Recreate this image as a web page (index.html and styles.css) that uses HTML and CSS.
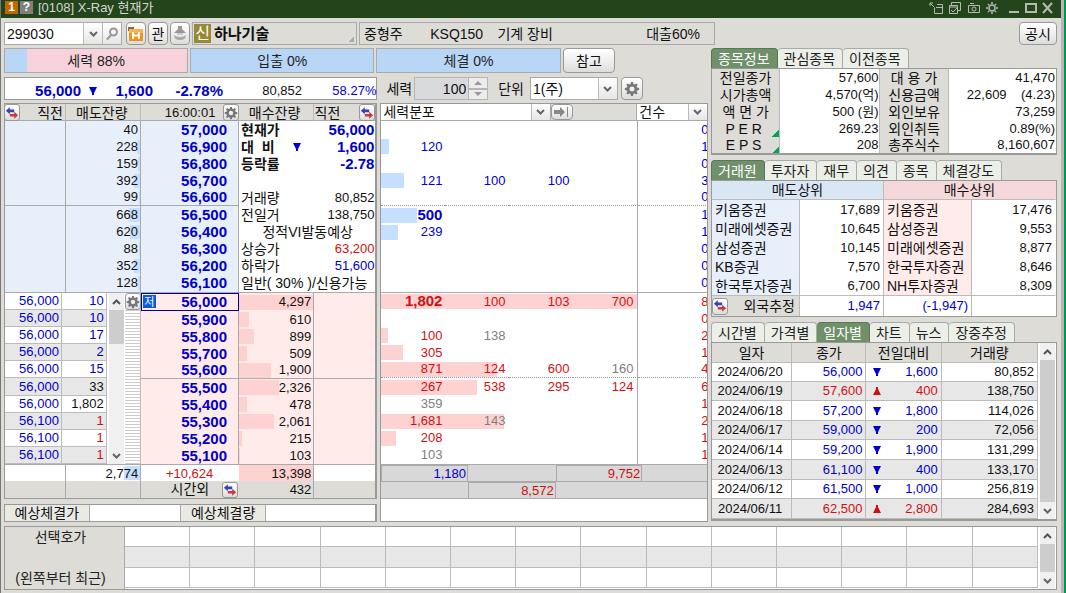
FILE: index.html
```html
<!DOCTYPE html>
<html lang="ko">
<head>
<meta charset="utf-8">
<title>[0108] X-Ray 현재가</title>
<link rel="stylesheet" href="styles.css">
</head>
<body>
<svg class="defs" aria-hidden="true">
  <symbol id="swap" viewBox="0 0 16 16"><path d="M1 5.500l4.500-4v2.500h5v3h-5V9.500z" fill="#3b3fb8"/><path d="M15 10.500l-4.500-4V9h-5v3h5v2.500z" fill="#c93a3a"/></symbol>
  <symbol id="gear" viewBox="0 0 16 16"><path fill="#777" fill-rule="evenodd" d="M7 1h2l.4 2 1.300.500L12.400 2.400l1.300 1.300-1.100 1.600.500 1.300 2 .4v2l-2 .4-.5 1.300 1.100 1.600-1.300 1.300-1.700-1.100-1.300.5L9 15H7l-.4-2-1.300-.5-1.700 1.100-1.300-1.300 1.100-1.600-.5-1.300-2-.4V7l2-.4.500-1.300-1.100-1.600 1.300-1.300 1.700 1.100L6.600 3zM8 5.500a2.500 2.500 0 1 0 0 5a2.500 2.500 0 0 0 0-5z"/></symbol>
  <symbol id="chev-down" viewBox="0 0 9 6"><path d="M1 1l3.500 3.500L8 1" fill="none" stroke="#666" stroke-width="2"/></symbol>
  <symbol id="chev-up" viewBox="0 0 9 6"><path d="M1 5l3.500-3.500L8 5" fill="none" stroke="#555" stroke-width="2"/></symbol>
  <symbol id="down" viewBox="0 0 8 8"><path d="M0 0h8L5 6v2H3V6z" fill="#0000d0"/></symbol>
  <symbol id="up" viewBox="0 0 8 8"><path d="M3 0h2v2l3 6H0l3-6z" fill="#d01010"/></symbol>
</svg>
<div class="window">
  <header class="titlebar">
    <span class="badge badge-num">1</span><span class="badge badge-help">?</span>
    <h1 class="title">[0108] X-Ray 현재가</h1>
    <div class="wintools">
      <button aria-label="분리"><svg width="14" height="12" viewBox="0 0 14 12"><path d="M5.500 5.500v6h8v-9H8M7 5.500h6.500M1 1l4 4M1 4V1h3" /></svg></button>
      <button aria-label="복사"><svg width="14" height="12" viewBox="0 0 14 12"><path d="M3.500 3V.5h9v8H10M1.500 3.500h8v8h-8zM1 5h9M3 8l2 2 4-4"/></svg></button>
      <button aria-label="캡처"><svg width="14" height="12" viewBox="0 0 14 12"><path d="M1.500 3.500h11v7h-11zM3 1.500h4M5 7a2 2 0 1 0 4 0a2 2 0 1 0-4 0"/></svg></button>
      <button aria-label="설정"><svg width="12" height="12" viewBox="0 0 12 12"><path d="M3 6a3 3 0 1 0 6 0a3 3 0 1 0-6 0M6 0v2M6 10v2M0 6h2M10 6h2M2 2l1 1M9 9l1 1M10 2L9 3M3 9l-1 1" stroke-width="1.500"/></svg></button>
      <button class="winbtn" aria-label="최소화"><svg width="12" height="12" viewBox="0 0 12 12"><path d="M1 10h10" stroke-width="2"/></svg></button>
      <button aria-label="최대화"><svg width="12" height="12" viewBox="0 0 12 12"><path d="M1 2h10v8H1z" stroke-width="2"/></svg></button>
      <button aria-label="닫기"><svg width="12" height="12" viewBox="0 0 12 12"><path d="M1 1l9 10M10 1l-9 10" stroke-width="2"/></svg></button>
    </div>
  </header>

  <main class="content">
    <div class="searchbar">
      <div class="codebox">
        <input class="code" type="text" value="299030" aria-label="종목코드">
        <button class="seg" aria-label="목록"><svg width="9" height="6"><use href="#chev-down"/></svg></button>
        <button class="seg" aria-label="검색"><svg width="13" height="14" viewBox="0 0 13 14"><path d="M4 5a3.500 3.500 0 1 0 7 0a3.500 3.500 0 1 0-7 0M5 8l-4 4.500" fill="none" stroke="#999" stroke-width="2"/></svg></button>
      </div>
      <button class="btn tool" aria-label="종목 폴더"><svg width="16" height="15" viewBox="0 0 16 15"><path d="M0 1h6v2h8v2H0z" fill="#8a6a3a"/><path d="M1 3h14v12H1z" fill="#f0921c"/><path d="M1 3h14v4H1z" fill="#f7b34e"/><path d="M5 6v7M11 6v7M5 9.500h6" stroke="#fff" stroke-width="2"/></svg></button>
      <button class="btn tool">관</button>
      <button class="btn tool" aria-label="알림"><svg width="14" height="16" viewBox="0 0 14 16"><path d="M5 0h4v3l4 4H1l4-4z" fill="#999"/><path d="M4 7h6v2H4z" fill="#ccc"/><path d="M1 9q0 5 6 5t6-5q-2 2-6 2T1 9z" fill="#aaa"/></svg></button>
      <div class="namebox"><span class="new">신</span><strong>하나기술</strong></div>
      <div class="infobox"><span>중형주</span><span>KSQ150</span><span>기계 장비</span><span class="loan">대출60%</span></div>
      <button class="btn notice">공시</button>
    </div>

    <div class="body">
      <section class="left">
        <div class="meters">
          <div class="meter meter-split">세력 88%</div>
          <div class="meter">입출 0%</div>
          <div class="meter">체결 0%</div>
          <button class="btn">참고</button>
        </div>
        <div class="quote">
          <b>56,000</b><svg width="8" height="8"><use href="#down"/></svg><b>1,600</b><b>-2.78%</b><span class="vol">80,852</span><span>58.27%</span>
        </div>
        <div class="options">
          <label for="force">세력</label>
          <div class="spin"><input id="force" type="text" value="100" disabled><div class="spinner"><button aria-label="증가"><svg width="8" height="4" viewBox="0 0 8 4"><path d="M0 4l4-4 4 4z" fill="#999"/></svg></button><button aria-label="감소"><svg width="8" height="4" viewBox="0 0 8 4"><path d="M0 0l4 4 4-4z" fill="#999"/></svg></button></div></div>
          <label for="unit">단위</label>
          <div class="combo unit"><select id="unit"><option>1(주)</option></select><span class="arrow"><svg width="9" height="6"><use href="#chev-down"/></svg></span></div>
          <button class="btn gearbtn" aria-label="설정"><svg width="16" height="16"><use href="#gear"/></svg></button>
        </div>

        <div class="bookcol">
          <div class="panel book">
            <div class="bookhead">
              <div class="bh"><button class="btn mini" aria-label="전환"><svg width="14" height="14"><use href="#swap"/></svg></button><span>직전</span></div>
              <div class="bh mid">매도잔량</div>
              <div class="bh"><span class="time">16:00:01</span><button class="btn mini" aria-label="설정"><svg width="14" height="14"><use href="#gear"/></svg></button></div>
              <div class="bh mid">매수잔량</div>
              <div class="bh"><span>직전</span><button class="btn mini" aria-label="전환"><svg width="14" height="14"><use href="#swap"/></svg></button></div>
            </div>
            <div class="asks">
              <table class="asktable">
                <colgroup><col class="c61"><col class="c75"><col class="c98"></colgroup>
                <tr><td></td><td>40</td><td class="px">57,000</td></tr>
                <tr><td></td><td class="rb" style="--w:3px">228</td><td class="px">56,900</td></tr>
                <tr><td></td><td class="rb" style="--w:2px">159</td><td class="px">56,800</td></tr>
                <tr><td></td><td class="rb" style="--w:6px">392</td><td class="px">56,700</td></tr>
                <tr class="fifth"><td></td><td class="rb" style="--w:1px">99</td><td class="px">56,600</td></tr>
                <tr><td></td><td class="rb" style="--w:11px">668</td><td class="px">56,500</td></tr>
                <tr><td></td><td class="rb" style="--w:10px">620</td><td class="px">56,400</td></tr>
                <tr><td></td><td class="rb" style="--w:1px">88</td><td class="px">56,300</td></tr>
                <tr><td></td><td class="rb" style="--w:6px">352</td><td class="px">56,200</td></tr>
                <tr><td></td><td class="rb" style="--w:2px">128</td><td class="px">56,100</td></tr>
              </table>
              <div class="facts">
                <p class="strong"><span>현재가</span><b>56,000</b></p>
                <p class="strong"><span>대  비</span><svg width="8" height="8"><use href="#down"/></svg><b>1,600</b></p>
                <p class="strong"><span>등락률</span><b>-2.78</b></p>
                <p></p>
                <p><span>거래량</span><i>80,852</i></p>
                <p><span>전일거</span><i>138,750</i></p>
                <p class="center"><span>정적VI발동예상</span></p>
                <p><span>상승가</span><i class="red">63,200</i></p>
                <p><span>하락가</span><i class="blue">51,600</i></p>
                <p><span>일반( 30% )/신용가능</span></p>
              </div>
            </div>
            <div class="bids">
              <div class="ticks">
                <table class="ticktable">
                  <colgroup><col class="c57"><col class="c45"></colgroup>
                  <tr><td>56,000</td><td class="blue">10</td></tr>
                  <tr><td>56,000</td><td class="blue">10</td></tr>
                  <tr><td>56,000</td><td class="blue">17</td></tr>
                  <tr><td>56,000</td><td class="blue">2</td></tr>
                  <tr><td>56,000</td><td class="blue">15</td></tr>
                  <tr><td>56,000</td><td>33</td></tr>
                  <tr><td>56,000</td><td>1,802</td></tr>
                  <tr><td>56,100</td><td class="red">1</td></tr>
                  <tr><td>56,100</td><td class="red">1</td></tr>
                  <tr><td>56,100</td><td class="red">1</td></tr>
                </table>
                <div class="scroll"><button aria-label="위로"><svg width="9" height="6"><use href="#chev-up"/></svg></button><span class="thumb tick-thumb"></span><button class="end" aria-label="아래로"><svg width="9" height="6"><use href="#chev-down"/></svg></button></div>
                <div class="stripes"><button class="btn mini" aria-label="설정"><svg width="14" height="14"><use href="#gear"/></svg></button></div>
              </div>
              <table class="bidtable">
                <colgroup><col class="c98"><col class="c75"><col class="c61"></colgroup>
                <tr><td class="px now"><span class="low">저</span>56,000</td><td class="lb" style="--w:100%">4,297</td><td></td></tr>
                <tr><td class="px">55,900</td><td class="lb" style="--w:10px">610</td><td></td></tr>
                <tr><td class="px">55,800</td><td class="lb" style="--w:15px">899</td><td></td></tr>
                <tr><td class="px">55,700</td><td class="lb" style="--w:8px">509</td><td></td></tr>
                <tr class="fifth"><td class="px">55,600</td><td class="lb" style="--w:32px">1,900</td><td></td></tr>
                <tr><td class="px">55,500</td><td class="lb" style="--w:40px">2,326</td><td></td></tr>
                <tr><td class="px">55,400</td><td class="lb" style="--w:8px">478</td><td></td></tr>
                <tr><td class="px">55,300</td><td class="lb" style="--w:35px">2,061</td><td></td></tr>
                <tr><td class="px">55,200</td><td class="lb" style="--w:3px">215</td><td></td></tr>
                <tr><td class="px">55,100</td><td class="lb" style="--w:1px">103</td><td></td></tr>
              </table>
            </div>
            <table class="sums">
              <colgroup><col class="c61"><col class="c75"><col class="c98"><col class="c75"><col class="c61"></colgroup>
              <tr><td></td><td class="rb" style="--w:16px">2,774</td><td class="red net">+10,624</td><td class="total">13,398</td><td></td></tr>
              <tr class="after"><td></td><td></td><td><span class="afterhead"><span>시간외</span><button class="btn mini" aria-label="전환"><svg width="14" height="14"><use href="#swap"/></svg></button></span></td><td>432</td><td></td></tr>
            </table>
          </div>
          <div class="panel expect"><label for="ep">예상체결가</label><input id="ep" type="text"><label for="eq">예상체결량</label><input id="eq" type="text"></div>
        </div>

        <div class="panel dist">
          <div class="disthead">
            <div class="combo"><select aria-label="분포 종류"><option>세력분포</option></select><span class="arrow"><svg width="9" height="6"><use href="#chev-down"/></svg></span></div>
            <button class="btn jump" aria-label="끝으로"><svg width="15" height="10" viewBox="0 0 15 10"><path d="M0 3h6V0l5 5-5 5V7H0z" fill="#888"/><path d="M13.500 0v10" stroke="#888"/></svg></button>
            <div class="combo count"><select aria-label="표시 항목"><option>건수</option></select><span class="arrow"><svg width="9" height="6"><use href="#chev-down"/></svg></span></div>
          </div>
          <table class="disttable blue">
            <colgroup><col class="c64"><col class="c64"><col class="c64"><col class="c65"><col class="c70"></colgroup>
            <tr><td></td><td></td><td></td><td></td><td>0</td></tr>
            <tr class="bar" style="--w:8px"><td>120</td><td></td><td></td><td></td><td>1</td></tr>
            <tr><td></td><td></td><td></td><td></td><td>0</td></tr>
            <tr class="bar" style="--w:23px"><td>121</td><td>100</td><td>100</td><td></td><td>3</td></tr>
            <tr class="fifth"><td></td><td></td><td></td><td></td><td>0</td></tr>
            <tr class="bar" style="--w:36px"><td><b>500</b></td><td></td><td></td><td></td><td>1</td></tr>
            <tr class="bar" style="--w:17px"><td>239</td><td></td><td></td><td></td><td>1</td></tr>
            <tr><td></td><td></td><td></td><td></td><td>0</td></tr>
            <tr><td></td><td></td><td></td><td></td><td>0</td></tr>
            <tr><td></td><td></td><td></td><td></td><td>0</td></tr>
          </table>
          <table class="disttable red">
            <colgroup><col class="c64"><col class="c64"><col class="c64"><col class="c65"><col class="c70"></colgroup>
            <tr class="bar" style="--w:256px"><td><b>1,802</b></td><td>100</td><td>103</td><td>700</td><td>8</td></tr>
            <tr><td></td><td></td><td></td><td></td><td>0</td></tr>
            <tr class="bar" style="--w:7px"><td>100</td><td class="gray">138</td><td></td><td></td><td>2</td></tr>
            <tr class="bar" style="--w:22px"><td>305</td><td></td><td></td><td></td><td>1</td></tr>
            <tr class="bar fifth" style="--w:116px"><td>871</td><td>124</td><td>600</td><td class="gray">160</td><td>4</td></tr>
            <tr class="bar" style="--w:96px"><td>267</td><td>538</td><td>295</td><td>124</td><td>6</td></tr>
            <tr><td class="gray">359</td><td></td><td></td><td></td><td>1</td></tr>
            <tr class="bar" style="--w:123px"><td>1,681</td><td class="gray">143</td><td></td><td></td><td>2</td></tr>
            <tr class="bar" style="--w:15px"><td>208</td><td></td><td></td><td></td><td>1</td></tr>
            <tr><td class="gray">103</td><td></td><td></td><td></td><td>1</td></tr>
          </table>
          <div class="distsum"><span class="cell blue">1,180</span><span></span><span class="cell red">9,752</span><span></span></div>
          <div class="distsum"><span></span><span class="cell red">8,572</span><span></span><span></span></div>
        </div>
      </section>

      <section class="right">
        <div>
          <nav class="tabs"><button class="tab on">종목정보</button><button class="tab">관심종목</button><button class="tab">이전종목</button></nav>
          <table class="panel stock">
            <colgroup><col class="c68"><col class="c100"><col class="c68"><col class="c107"></colgroup>
            <tr><th>전일종가</th><td>57,600</td><th>대 용 가</th><td>41,470</td></tr>
            <tr><th>시가총액</th><td>4,570(억)</td><th>신용금액</th><td>22,609    (4.23)</td></tr>
            <tr><th>액 면 가</th><td>500 (원)</td><th>외인보유</th><td>73,259</td></tr>
            <tr><th class="corner">P E R</th><td>269.23</td><th>외인취득</th><td>0.89(%)</td></tr>
            <tr><th class="corner">E P S</th><td>208</td><th>총주식수</th><td>8,160,607</td></tr>
          </table>
        </div>
        <div>
          <nav class="tabs"><button class="tab on">거래원</button><button class="tab">투자자</button><button class="tab">재무</button><button class="tab">의견</button><button class="tab">종목</button><button class="tab">체결강도</button></nav>
          <table class="panel brokers">
            <colgroup><col class="c88"><col class="c84"><col class="c88"><col class="c84"></colgroup>
            <tr class="head"><th colspan="2" class="sell">매도상위</th><th colspan="2" class="buy">매수상위</th></tr>
            <tr><th class="s">키움증권</th><td>17,689</td><th class="b">키움증권</th><td>17,476</td></tr>
            <tr><th class="s">미래에셋증권</th><td>10,645</td><th class="b">삼성증권</th><td>9,553</td></tr>
            <tr><th class="s">삼성증권</th><td>10,145</td><th class="b">미래에셋증권</th><td>8,877</td></tr>
            <tr><th class="s">KB증권</th><td>7,570</td><th class="b">한국투자증권</th><td>8,646</td></tr>
            <tr><th class="s">한국투자증권</th><td>6,700</td><th class="b">NH투자증권</th><td>8,309</td></tr>
            <tr class="foreign"><th><span class="fhead"><button class="btn mini" aria-label="전환"><svg width="14" height="14"><use href="#swap"/></svg></button><span>외국추정</span></span></th><td class="blue">1,947</td><td class="blue">(-1,947)</td><td></td></tr>
          </table>
        </div>
        <div>
          <nav class="tabs"><button class="tab">시간별</button><button class="tab">가격별</button><button class="tab on">일자별</button><button class="tab">차트</button><button class="tab">뉴스</button><button class="tab">장중추정</button></nav>
          <div class="panel daily">
            <table>
              <colgroup><col class="c80"><col class="c74"><col class="c75"><col class="c96"></colgroup>
              <tr><th>일자</th><th>종가</th><th>전일대비</th><th>거래량</th></tr>
              <tr><td>2024/06/20</td><td class="blue">56,000</td><td class="blue chg"><svg width="8" height="8"><use href="#down"/></svg>1,600</td><td>80,852</td></tr>
              <tr><td>2024/06/19</td><td class="red">57,600</td><td class="red chg"><svg width="8" height="8"><use href="#up"/></svg>400</td><td>138,750</td></tr>
              <tr class="tall"><td>2024/06/18</td><td class="blue">57,200</td><td class="blue chg"><svg width="8" height="8"><use href="#down"/></svg>1,800</td><td>114,026</td></tr>
              <tr><td>2024/06/17</td><td class="blue">59,000</td><td class="blue chg"><svg width="8" height="8"><use href="#down"/></svg>200</td><td>72,056</td></tr>
              <tr class="tall"><td>2024/06/14</td><td class="blue">59,200</td><td class="blue chg"><svg width="8" height="8"><use href="#down"/></svg>1,900</td><td>131,299</td></tr>
              <tr class="tall"><td>2024/06/13</td><td class="blue">61,100</td><td class="blue chg"><svg width="8" height="8"><use href="#down"/></svg>400</td><td>133,170</td></tr>
              <tr><td>2024/06/12</td><td class="blue">61,500</td><td class="blue chg"><svg width="8" height="8"><use href="#down"/></svg>1,000</td><td>256,819</td></tr>
              <tr class="tall"><td>2024/06/11</td><td class="red">62,500</td><td class="red chg"><svg width="8" height="8"><use href="#up"/></svg>2,800</td><td>284,693</td></tr>
            </table>
            <div class="scroll"><button aria-label="위로"><svg width="9" height="6"><use href="#chev-up"/></svg></button><span class="thumb fill"></span><button class="end" aria-label="아래로"><svg width="9" height="6"><use href="#chev-down"/></svg></button></div>
          </div>
        </div>
      </section>
    </div>

    <section class="panel picks">
      <div class="pickhead"><span>선택호가</span><span>(왼쪽부터 최근)</span></div>
      <table>
        <tr><td></td><td></td><td></td><td></td><td></td><td></td><td></td><td></td><td></td><td></td><td></td><td></td><td></td><td></td></tr>
        <tr><td></td><td></td><td></td><td></td><td></td><td></td><td></td><td></td><td></td><td></td><td></td><td></td><td></td><td></td></tr>
        <tr><td></td><td></td><td></td><td></td><td></td><td></td><td></td><td></td><td></td><td></td><td></td><td></td><td></td><td></td></tr>
      </table>
      <div class="scroll"><button aria-label="위로"><svg width="9" height="6"><use href="#chev-up"/></svg></button><span class="thumb fill"></span><button class="end" aria-label="아래로"><svg width="9" height="6"><use href="#chev-down"/></svg></button></div>
    </section>
  </main>
</div>
</body>
</html>
```
FILE: styles.css
```css
* { box-sizing: border-box; }
body, h1, p { margin: 0; }
body {
  background: #00964b;
  color: #111;
  font: 14px/16px "Liberation Sans", "Noto Sans CJK KR", sans-serif;
}
button, input, select { font: inherit; color: inherit; margin: 0; padding: 0; border: 0; border-radius: 0; background: none; min-width: 0; }
svg { display: block; flex: none; }
.defs { position: absolute; width: 0; height: 0; }
table { width: 100%; border-collapse: separate; border-spacing: 0; table-layout: fixed; }
td, th { padding: 0; font-weight: 400; white-space: pre; overflow: hidden; }
td { font-size: 13px; text-align: right; }
.blue { color: #0000c8; }
.red { color: #d01010; }
td.gray { color: #808080; }

.window {
  min-height: 100vh;
  margin-right: 2px;
  border-left: 1px solid #777;
  border-right: 3px solid #b4b6ba;
  background: #dddcd7;
}
.titlebar { display: flex; align-items: center; height: 18px; padding: 0 7px 0 4px; background: #24451c; color: #d2d6d0; }
.badge { width: 13px; height: 13px; line-height: 13px; font-size: 12px; font-weight: 700; text-align: center; color: #fff; margin: 0 2px 3px 0; }
.badge-num { background: #c06800; }
.badge-help { background: #808080; }
.title { font-size: 13px; line-height: 14px; font-weight: 400; margin: 0 auto 3px 3px; }
.wintools { display: flex; gap: 5px; margin-bottom: 3px; }
.wintools svg { fill: none; stroke: #b4bcb2; }
.winbtn { margin-left: 5px; }

.content { padding: 4px 4px 3px 3px; }
.btn {
  display: flex; align-items: center; justify-content: center;
  border: 1px solid #999; border-radius: 4px;
  background: linear-gradient(#fff, #ececec 60%, #dcdcdc);
}
.mini { width: 16px; height: 17px; border-radius: 3px; flex: none; }
.panel { border: 1px solid #999; background: #fff; }

.searchbar { display: flex; height: 23px; gap: 2px; }
.codebox { display: flex; width: 118px; border: 1px solid #aaa; margin-right: 2px; background: #fff; }
.code { width: 78px; padding-left: 2px; }
.seg { width: 19px; display: flex; align-items: center; justify-content: center; border-left: 1px solid #bbb; background: linear-gradient(#fff, #e6e6e6); }
.tool { width: 20px; }
.namebox { display: flex; align-items: center; width: 165px; border: 1px solid #aaa; padding-left: 1px; gap: 3px; font-size: 15px;
  background: linear-gradient(135deg, transparent 50%, #aaa 50%) right 2px bottom 2px / 5px 5px no-repeat; }
.new { width: 17px; line-height: 19px; font-size: 16px; text-align: center; background: #968a32; color: #fff; }
.infobox { display: grid; grid-template-columns: 67fr 68fr 100fr 105fr; align-items: center; flex: 0 0 356px; border: 1px solid #aaa; padding: 0 14px 0 4px; }
.loan { text-align: right; }
.notice { width: 38px; margin-left: auto; }

.body { display: grid; grid-template-columns: 705fr 345fr; gap: 3px; margin-top: 3px; }
.left { display: grid; grid-template-columns: 374fr 328fr; grid-template-rows: 25px 23px auto; gap: 4px 3px; align-content: start; }
.meters { grid-column: 1 / -1; display: grid; grid-template-columns: 185fr 185fr 185fr 53fr 91fr; gap: 2px; }
.meter { display: flex; align-items: center; justify-content: center; border: 1px solid #aaa; background: #b8d6f5; color: #222; }
.meter-split { background: linear-gradient(to right, #b8d6f5 12%, #f7d2dc 12%); }
.quote {
  display: grid; align-items: center; grid-template-columns: 76px 16px 56px 70px 79px 1fr;
  border: 1px solid #999; background: #fff; color: #0000c8; text-align: right; padding-top: 4px;
}
.quote b { font-size: 15px; }
.quote span { font-size: 13px; }
.quote svg { margin-left: 8px; }
.vol { color: #111; }
.options { display: flex; align-items: center; padding-left: 6px; }
.options > * { flex: none; }
.spin { display: flex; width: 74px; height: 23px; margin: 0 10px 0 2px; border: 1px solid #b5b5b5; background: #d8dadc; }
.spin input { flex: 1; text-align: right; padding-right: 2px; }
.spinner { display: grid; width: 19px; border-left: 1px solid #b5b5b5; }
.spinner button { display: flex; align-items: center; justify-content: center; background: #ececec; }
.spinner button + button { border-top: 2px solid #b5b5b5; }
.combo { position: relative; display: flex; border: 1px solid #aaa; background: #fff; }
.combo select { appearance: none; width: 100%; padding-left: 2px; }
.arrow { position: absolute; top: 0; right: 0; bottom: 0; width: 19px; display: flex; align-items: center; justify-content: center; border-left: 1px solid #bbb; background: linear-gradient(#fff, #e6e6e6); pointer-events: none; }
.unit { width: 88px; height: 23px; margin: 0 3px 0 6px; }
.gearbtn { width: 22px; height: 23px; }

.c45 { width: 45px; } .c57 { width: 57px; } .c61 { width: 61px; } .c64 { width: 64px; } .c65 { width: 65px; }
.c68 { width: 68px; } .c70 { width: 70px; } .c74 { width: 74px; } .c75 { width: 75px; } .c80 { width: 80px; }
.c84 { width: 84px; } .c88 { width: 88px; } .c96 { width: 96px; } .c98 { width: 98px; } .c100 { width: 100px; } .c107 { width: 107px; }

.bookcol { display: flex; flex-direction: column; gap: 5px; margin-top: -1px; }
.book { border-right-width: 2px; }
.bookhead { display: grid; grid-template-columns: 61fr 75fr 98fr 75fr 62fr; height: 17px; background: #dddcd7; border-bottom: 1px solid #aaa; }
.bh { display: flex; align-items: center; justify-content: space-between; padding-right: 2px; border-right: 1px solid #bbb; }
.bh:last-child { border: 0; padding: 0 0 0 1px; }
.bh:nth-child(3) { border: 0; padding: 0; }
.bh:first-child .mini { margin-left: -1px; }
.mid { justify-content: center; }
.time { font-size: 13px; padding-left: 24px; }
.asks { display: grid; grid-template-columns: 234fr 137fr; height: 172px; border-bottom: 1px solid #aaa; }
.asktable { height: 171px; background: #e7effb; }
.asktable td, .bidtable td, .sums td { height: 17px; line-height: 16px; border-right: 1px solid #aaa; padding-right: 2px; }
.bidtable td:last-child, .sums td:last-child { border-right: 0; }
.fifth td { border-bottom: 1px solid #aaa; }
.rb { background: linear-gradient(#c7dfff, #c7dfff) right center / var(--w) 14px no-repeat; }
.lb { background: linear-gradient(#ffd2d2, #ffd2d2) left center / var(--w) 15px no-repeat; }
.asktable .px, .bidtable .px { font-size: 15px; font-weight: 700; color: #0000c8; padding-right: 11px; }
.facts { display: grid; grid-template-rows: repeat(10, 1fr); padding: 0 1px 0 2px; }
.facts p { display: flex; justify-content: space-between; align-items: center; white-space: pre; }
.facts i { font-style: normal; font-size: 13px; }
.facts b { font-size: 15px; color: #0000c8; min-width: 56px; text-align: right; }
.facts .strong { font-weight: 700; }
.facts .center { justify-content: center; }
.bids { display: grid; grid-template-columns: 136fr 235fr; height: 172px; border-bottom: 1px solid #aaa; }
.ticks { display: flex; }
.ticktable { flex: 1; width: auto; height: 171px; }
.ticktable td { height: 17px; line-height: 16px; border: solid #bbb; border-width: 0 1px 1px 0; padding-right: 2px; }
.ticktable td:first-child { color: #0000c8; }
.ticktable tr:nth-child(even) { background: #e7e7e7; }
.scroll { display: flex; flex-direction: column; flex: none; width: 15px; background: #f0f0f0; margin: 0 1px 0 2px; }
.scroll button { display: flex; align-items: center; justify-content: center; height: 17px; flex: none; }
.scroll .end { margin-top: auto; }
.thumb { background: #cdcdcd; }
.tick-thumb { height: 34px; }
.fill { flex: 1; }
.stripes { flex: none; width: 16px; border-right: 1px solid #bbb; background: repeating-linear-gradient(#fff 0 2px, #ccc 2px 3px); }
.bidtable { height: 171px; background: #ffebea; }
.bidtable .now { border: 1px solid #0000a0; }
.low { float: left; width: 13px; height: 13px; line-height: 14px; font-size: 11px; font-weight: 400; margin: 1px 0 0 1px; background: #0a5be0; color: #fff; text-align: center; }
.sums td { height: 16px; line-height: 15px; }
.sums .total { background: #ffd2d2; }
.after { background: #dddcd7; }
.afterhead { display: flex; align-items: center; justify-content: flex-end; gap: 13px; font-size: 14px; }
.afterhead .mini { height: 16px; }
.sums .after td { height: 17px; }
.sums .after td:nth-child(3), .sums .net { border-right-color: transparent; padding-right: 0; }
.sums .net { padding-right: 25px; }
.expect { display: grid; grid-template-columns: 85fr 91fr 86fr 110fr; height: 18px; border-right-width: 2px; }
.expect label { background: #e9eae3; border-right: 1px solid #aaa; text-align: center; }
.expect input + label { border-left: 1px solid #aaa; }

.dist { margin-top: -1px; overflow: hidden; }
.disthead { display: grid; grid-template-columns: 170fr 22fr 64fr 71fr; height: 17px; background: #dddcd7; border-bottom: 1px solid #aaa; }
.disthead .combo { border-width: 0 1px 0 0; }
.disthead .count { grid-column: 4; border-width: 0 0 0 1px; }
.disthead select { line-height: 15px; }
.disttable { height: 172px; border-bottom: 1px solid #aaa; }
.disttable td { height: 17px; line-height: 16px; padding-right: 4px; }
.disttable td:nth-child(1) { padding-right: 3px; }
.disttable td:nth-child(4) { border-right: 1px solid #aaa; }
.disttable td:last-child { padding-right: 0; }
.disttable .fifth td { border-bottom: 1px dotted #999; }
.disttable b { font-size: 15px; }
.bar { background: linear-gradient(#c7dfff, #c7dfff) left center / var(--w) 15px no-repeat; }
.disttable.red .bar { background-image: linear-gradient(#ffd2d2, #ffd2d2); }
.distsum { display: grid; grid-template-columns: 87fr 88fr 87fr 65fr; height: 17px; background: #d8d8d8; border-bottom: 1px solid #aaa; font-size: 13px; text-align: right; }
.cell { border: 1px solid #aaa; border-bottom: 0; line-height: 15px; padding-right: 1px; }

.right { display: grid; align-content: start; gap: 5px; }
.tabs { display: flex; height: 20px; }
.tab { padding: 0 7px 0 6px; border: 1px solid #aaa; border-bottom: 0; border-left-width: 0; border-radius: 4px 4px 0 0; background: #ecefe8; color: #222; white-space: nowrap; }
.tab:first-child { border-left-width: 1px; }
.tab.on { background: #70906a; border-color: #5a7656; color: #fff; }
.right th, .right td { height: 17px; line-height: 16px; }
.stock { border-bottom-width: 2px; }
.stock th { background: #dddcd7; }
.stock td, .stock th { border-right: 1px solid #bbb; padding: 0 1px; }
.stock td:last-child { border-right: 0; }
.stock tr:last-child > * { height: 16px; }
.stock .corner { background: #dddcd7 linear-gradient(135deg, transparent 50%, #00a651 50%) right bottom / 7px 7px no-repeat; padding-right: 5px; }
.right .brokers th, .right .brokers td { height: 19px; border-right: 1px solid #bbb; padding: 0 3px; text-align: left; }
.right .brokers td { text-align: right; }
.right .brokers .head th { text-align: center; border-bottom: 1px solid #bbb; }
.sell { background: #d9e7f5; }
.buy { background: #f5d8da; }
.s { background: #e7effb; }
.b { background: #ffebea; }
.right .brokers .foreign > * { border-top: 1px solid #bbb; height: 21px; }
.right .brokers .foreign th { background: #dddcd7; padding: 0; }
.fhead { display: flex; justify-content: space-between; align-items: center; padding-right: 4px; }
.brokers tr > *:last-child { border-right-color: transparent; }
.daily { display: flex; border-bottom-width: 2px; }
.daily table { flex: 1; width: auto; }
.right .daily td, .right .daily th { height: 19px; border: solid #bbb; border-width: 0 1px 1px 0; padding-right: 3px; }
.right .daily th { height: 20px; background: #dddcd7; padding: 0; }
.right .daily .tall td { height: 20px; }
.daily tr:nth-child(odd) { background: #e7e7e7; }
.daily td:first-child { text-align: center; }
.chg svg { float: left; margin: 4px 0 0 7px; }

.picks { display: flex; margin-top: 4px; height: 64px; }
.pickhead { flex: none; width: 120px; display: flex; flex-direction: column; justify-content: space-between; align-items: center; padding: 2px 8px 3px 0; background: #dddcd7; border-right: 1px solid #aaa; color: #222; }
.picks table { flex: 1; width: auto; height: 61px; }
.picks td { border: solid #bbb; border-width: 0 1px 1px 0; }
.picks tr:nth-child(2) { background: #e7e7e7; }
```
